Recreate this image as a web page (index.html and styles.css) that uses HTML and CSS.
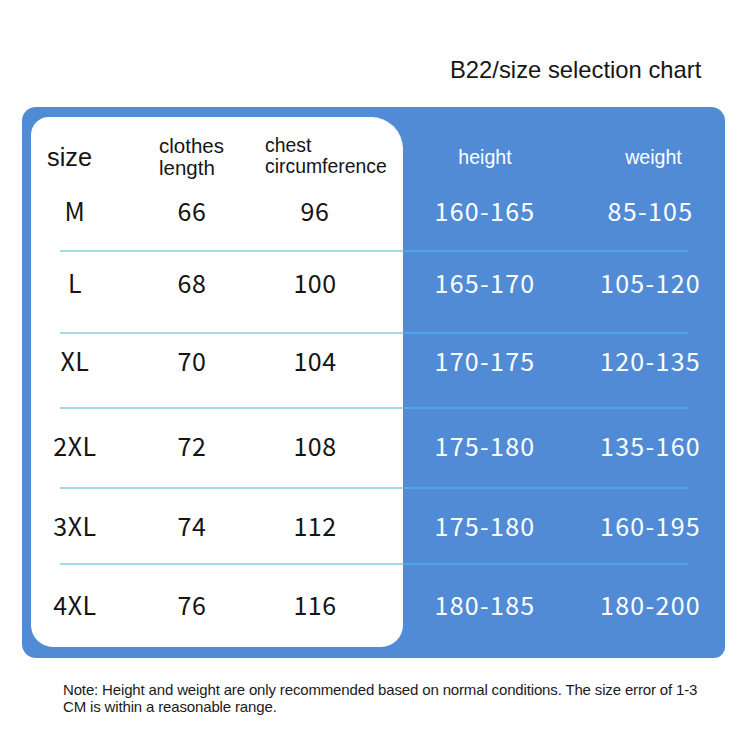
FILE: index.html
```html
<!DOCTYPE html>
<html lang="en">
<head>
<meta charset="utf-8">
<title>B22 size selection chart</title>
<link rel="stylesheet" href="styles.css">
</head>
<body>
<div class="page">
  <h1 class="title">B22/size selection chart</h1>
  <div class="card">
    <div class="panel">
      <div class="row head">
        <div class="hsize">size</div>
        <div class="hlen">clothes<br>length</div>
        <div class="hchest">chest<br>circumference</div>
      </div>
      <div class="row r1"><div class="c sz">M</div><div class="c len">66</div><div class="c chest">96</div></div>
      <div class="row r2 line"><div class="c sz">L</div><div class="c len">68</div><div class="c chest">100</div></div>
      <div class="row r3 line"><div class="c sz">XL</div><div class="c len">70</div><div class="c chest">104</div></div>
      <div class="row r4 line"><div class="c sz">2XL</div><div class="c len">72</div><div class="c chest">108</div></div>
      <div class="row r5 line"><div class="c sz">3XL</div><div class="c len">74</div><div class="c chest">112</div></div>
      <div class="row r6 line"><div class="c sz">4XL</div><div class="c len">76</div><div class="c chest">116</div></div>
    </div>
    <div class="side">
      <div class="row head">
        <div class="hh">height</div>
        <div class="hw">weight</div>
      </div>
      <div class="row r1"><div class="c h">160-165</div><div class="c w">85-105</div></div>
      <div class="row r2 line"><div class="c h">165-170</div><div class="c w">105-120</div></div>
      <div class="row r3 line"><div class="c h">170-175</div><div class="c w">120-135</div></div>
      <div class="row r4 line"><div class="c h">175-180</div><div class="c w">135-160</div></div>
      <div class="row r5 line"><div class="c h">175-180</div><div class="c w">160-195</div></div>
      <div class="row r6 line"><div class="c h">180-185</div><div class="c w">180-200</div></div>
    </div>
  </div>
  <p class="note">Note: Height and weight are only recommended based on normal conditions. The size error of 1-3<br>CM is within a reasonable range.</p>
</div>
</body>
</html>
```
FILE: styles.css
```css
* { box-sizing: border-box; }
html, body { margin: 0; padding: 0; background: #ffffff; }
body { font-family: "Liberation Sans", Arial, sans-serif; color: #151515; }

.page { width: 750px; height: 750px; overflow: hidden; }

.title {
  margin: 0;
  padding: 56px 0 0 450px;
  height: 107px;
  font-weight: normal;
  font-size: 23.8px;
  line-height: 28px;
  color: #161616;
}

.card {
  margin-left: 22px;
  width: 703px;
  height: 551px;
  background: #518bd6;
  border-radius: 14px 14px 11px 14px;
  padding: 10px 9px 11px 9px;
  display: flex;
}

.panel {
  width: 372px;
  height: 530px;
  background: #ffffff;
  border-radius: 18px 32px 22px 22px;
  flex: none;
}

.side {
  width: 313px;
  flex: none;
  color: #ffffff;
}

.row {
  display: grid;
  align-items: start;
}
.panel .row { grid-template-columns: 88px 146px 100px; }
.side .row { grid-template-columns: 164px 149px; }

.panel .row.line {
  background: linear-gradient(#a3dae9, #a3dae9) 29px 0 / 343px 2px no-repeat;
}
.side .row.line {
  background: linear-gradient(#4ba6ee, #4ba6ee) 0 0 / 285px 2px no-repeat;
}

.head { height: 68px; padding-top: 18px; }
.r1 { height: 65px; padding-top: 10px; }
.r2 { height: 82px; padding-top: 17px; }
.r3 { height: 75px; padding-top: 13px; }
.r4 { height: 80px; padding-top: 23px; }
.r5 { height: 76px; padding-top: 23px; }
.r6 { height: 84px; padding-top: 26px; }

.c {
  font-family: "Noto Sans CJK SC", "Noto Sans", sans-serif;
  font-size: 25px;
  line-height: 30px;
  text-align: center;
  letter-spacing: 0.5px;
}
.panel .c { color: #141414; }
.side .c { color: #ffffff; letter-spacing: 1.3px; }
.side .w { padding-left: 18px; }

.hsize {
  font-size: 25.3px;
  line-height: 44px;
  padding-left: 16px;
  white-space: nowrap;
}
.hlen {
  font-size: 20.5px;
  line-height: 22px;
  padding-left: 40px;
  white-space: nowrap;
}
.hchest {
  font-size: 19.4px;
  line-height: 21px;
  white-space: nowrap;
}
.hh, .hw {
  font-size: 19.6px;
  line-height: 44px;
  text-align: center;
  color: #ffffff;
}
.hw { padding-left: 18px; margin-left: 6px; }

.note {
  margin: 23px 0 0 63px;
  font-size: 15px;
  line-height: 17px;
  color: #1a1a1a;
  letter-spacing: -0.15px;
  white-space: nowrap;
}
```
